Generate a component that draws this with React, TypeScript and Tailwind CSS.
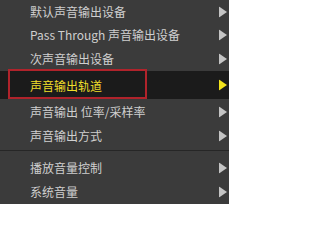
const ITEMS = [
  { label: "默认声音输出设备", h: "h-[23px]" },
  { label: "Pass Through 声音输出设备", h: "h-[24px]" },
  { label: "次声音输出设备", h: "h-[24px]" },
  { label: "声音输出轨道", h: "h-[28px]", active: true },
  { label: "声音输出 位率/采样率", h: "h-[25px]" },
  { label: "声音输出方式", h: "h-[23px]" },
  { sep: true },
  { label: "播放音量控制", h: "h-[25px]" },
  { label: "系统音量", h: "h-[23px]" },
];

function Arrow({ active }: { active?: boolean }) {
  return (
    <svg width="8" height="11" viewBox="0 0 8 11" className="absolute left-[219px] top-1/2 -translate-y-1/2">
      <polygon points="0,0 8,5.5 0,11" fill={active ? "#f2e31c" : "#c4c4c4"} />
    </svg>
  );
}

export default function App() {
  return (
    <div
      className="w-[229px] h-[204px] overflow-hidden bg-[#3b3b3b] text-[12px] leading-none"
      style={{ fontFamily: '"Noto Sans CJK SC", "Noto Sans", sans-serif' }}
    >
      {ITEMS.map((item, i) =>
        item.sep ? (
          <div key={i} className="h-[8px] pt-[3px]">
            <div className="h-px bg-[#262626]" />
          </div>
        ) : (
          <div
            key={i}
            className={`relative flex items-center pl-[30px] ${item.h} ${
              item.active ? "bg-[#1b1b1b] text-[#f0df2a]" : "text-[#cfcfcf]"
            }`}
          >
            {item.active && (
              <div className="absolute left-[8px] top-[-2px] w-[139px] h-[30px] border-2 border-[#b0232b]" />
            )}
            <span className={item.active ? "pt-[1px]" : ""}>{item.label}</span>
            <Arrow active={item.active} />
          </div>
        )
      )}
    </div>
  );
}
